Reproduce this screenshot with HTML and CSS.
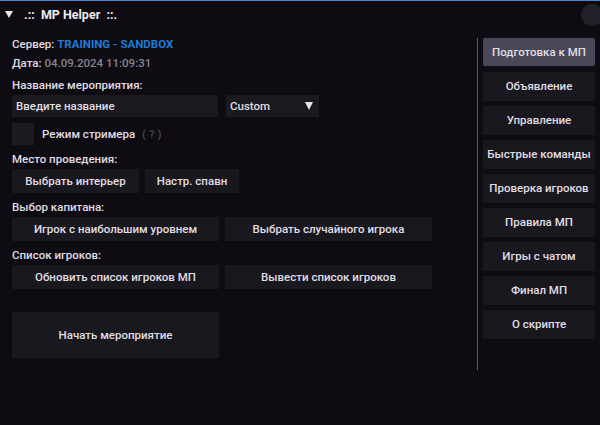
FILE: index.html
```html
<!DOCTYPE html>
<html lang="ru">
<head>
<meta charset="utf-8">
<title>MP Helper</title>
<link rel="stylesheet" href="styles.css">
</head>
<body>
<div class="window">
  <div class="titlebar">
    <span class="collapse"></span>
    <span class="title">.::&nbsp; MP Helper &nbsp;::.</span>
    <span class="close"></span>
  </div>
  <div class="main">
    <div class="left">
      <div class="line">Сервер: <span class="blue">TRAINING - SANDBOX</span></div>
      <div class="line date-line">Дата: <span class="grey">04.09.2024 11:09:31</span></div>
      <div class="line label-first">Название мероприятия:</div>
      <div class="row row-input">
        <div class="input">Введите название</div>
        <div class="combo"><span>Custom</span><span class="arrow"></span></div>
      </div>
      <div class="row row-check">
        <div class="checkbox"></div>
        <span class="check-label">Режим стримера</span>
        <span class="hint">( ? )</span>
      </div>
      <div class="line label">Место проведения:</div>
      <div class="row btn-row">
        <div class="btn w127">Выбрать интерьер</div>
        <div class="btn w94">Настр. спавн</div>
      </div>
      <div class="line label">Выбор капитана:</div>
      <div class="row btn-row">
        <div class="btn w207">Игрок с наибольшим уровнем</div>
        <div class="btn w207">Выбрать случайного игрока</div>
      </div>
      <div class="line label">Список игроков:</div>
      <div class="row btn-row">
        <div class="btn w207">Обновить список игроков МП</div>
        <div class="btn w207">Вывести список игроков</div>
      </div>
      <div class="btn big">Начать мероприятие</div>
    </div>
    <div class="separator"></div>
    <div class="right">
      <div class="tab active">Подготовка к МП</div>
      <div class="tab">Объявление</div>
      <div class="tab">Управление</div>
      <div class="tab">Быстрые команды</div>
      <div class="tab">Проверка игроков</div>
      <div class="tab">Правила МП</div>
      <div class="tab">Игры с чатом</div>
      <div class="tab">Финал МП</div>
      <div class="tab">О скрипте</div>
    </div>
  </div>
</div>
</body>
</html>
```

FILE: styles.css
```css
html, body {
  margin: 0;
  padding: 0;
  background: #0e0c12;
}
.window {
  width: 600px;
  height: 425px;
  overflow: hidden;
  background: #0e0c12;
  border-top: 1px solid #4c88c8;
  box-sizing: border-box;
  font-family: Roboto, "Noto Sans", sans-serif;
  font-size: 11.5px;
  font-weight: 500;
  color: #e0dee4;
}
.titlebar {
  height: 27px;
  display: flex;
  align-items: center;
  padding-left: 5px;
  position: relative;
}
.collapse {
  width: 0;
  height: 0;
  border-left: 4px solid transparent;
  border-right: 4px solid transparent;
  border-top: 7px solid #e8e6ec;
}
.title {
  margin-left: 11px;
  font-size: 12.5px;
  font-weight: 700;
  color: #ecebf0;
  white-space: pre;
}
.close {
  margin-left: auto;
  width: 22px;
  height: 22px;
  border-radius: 50%;
  background: #221f28;
  margin-right: -3px;
  margin-top: 1px;
}
.main {
  display: flex;
  align-items: flex-start;
}
.left {
  width: 465px;
  padding-left: 12px;
  padding-top: 7px;
  display: flex;
  flex-direction: column;
  align-items: flex-start;
}
.line {
  height: 18px;
  line-height: 18px;
  white-space: nowrap;
}
.blue { color: #1f7bd6; font-weight: 700; }
.grey { color: #87858d; font-weight: 500; }
.date-line { margin-top: 1px; }
.label-first { margin-top: 4px; }
.label { margin-top: 5px; }
.row {
  display: flex;
  align-items: center;
}
.row-input {
  margin-top: 1px;
  gap: 8px;
}
.input {
  width: 202px;
  height: 22px;
  line-height: 22px;
  background: #1b1920;
  padding-left: 4px;
}
.combo {
  width: 89px;
  height: 22px;
  line-height: 22px;
  background: #1b1920;
  padding-left: 4px;
  display: flex;
  justify-content: space-between;
  align-items: center;
}
.arrow {
  width: 0;
  height: 0;
  border-left: 4.5px solid transparent;
  border-right: 4.5px solid transparent;
  border-top: 8px solid #e6e4ea;
  margin-right: 6px;
}
.row-check {
  margin-top: 6px;
}
.checkbox {
  width: 22px;
  height: 22px;
  background: #1d1b22;
}
.check-label { margin-left: 8px; }
.hint {
  margin-left: 7px;
  color: #46444c;
}
.btn-row {
  margin-top: 1px;
  gap: 6px;
}
.btn {
  height: 24px;
  line-height: 24px;
  background: #1a181f;
  text-align: center;
  white-space: nowrap;
}
.w127 { width: 127px; }
.w94 { width: 94px; }
.w207 { width: 207px; }
.big {
  margin-top: 23px;
  width: 207px;
  height: 46px;
  line-height: 46px;
}
.separator {
  width: 1px;
  height: 332px;
  margin-top: 10px;
  background: #5e5c64;
}
.right {
  margin-left: 5px;
  padding-top: 10px;
  width: 112px;
  display: flex;
  flex-direction: column;
  gap: 5px;
}
.tab {
  height: 29px;
  line-height: 29px;
  background: #1a181f;
  text-align: center;
  white-space: nowrap;
}
.tab.active {
  background: #4a4856;
  height: 28px;
  line-height: 28px;
  margin-bottom: 1px;
  border-radius: 2px;
}
```
